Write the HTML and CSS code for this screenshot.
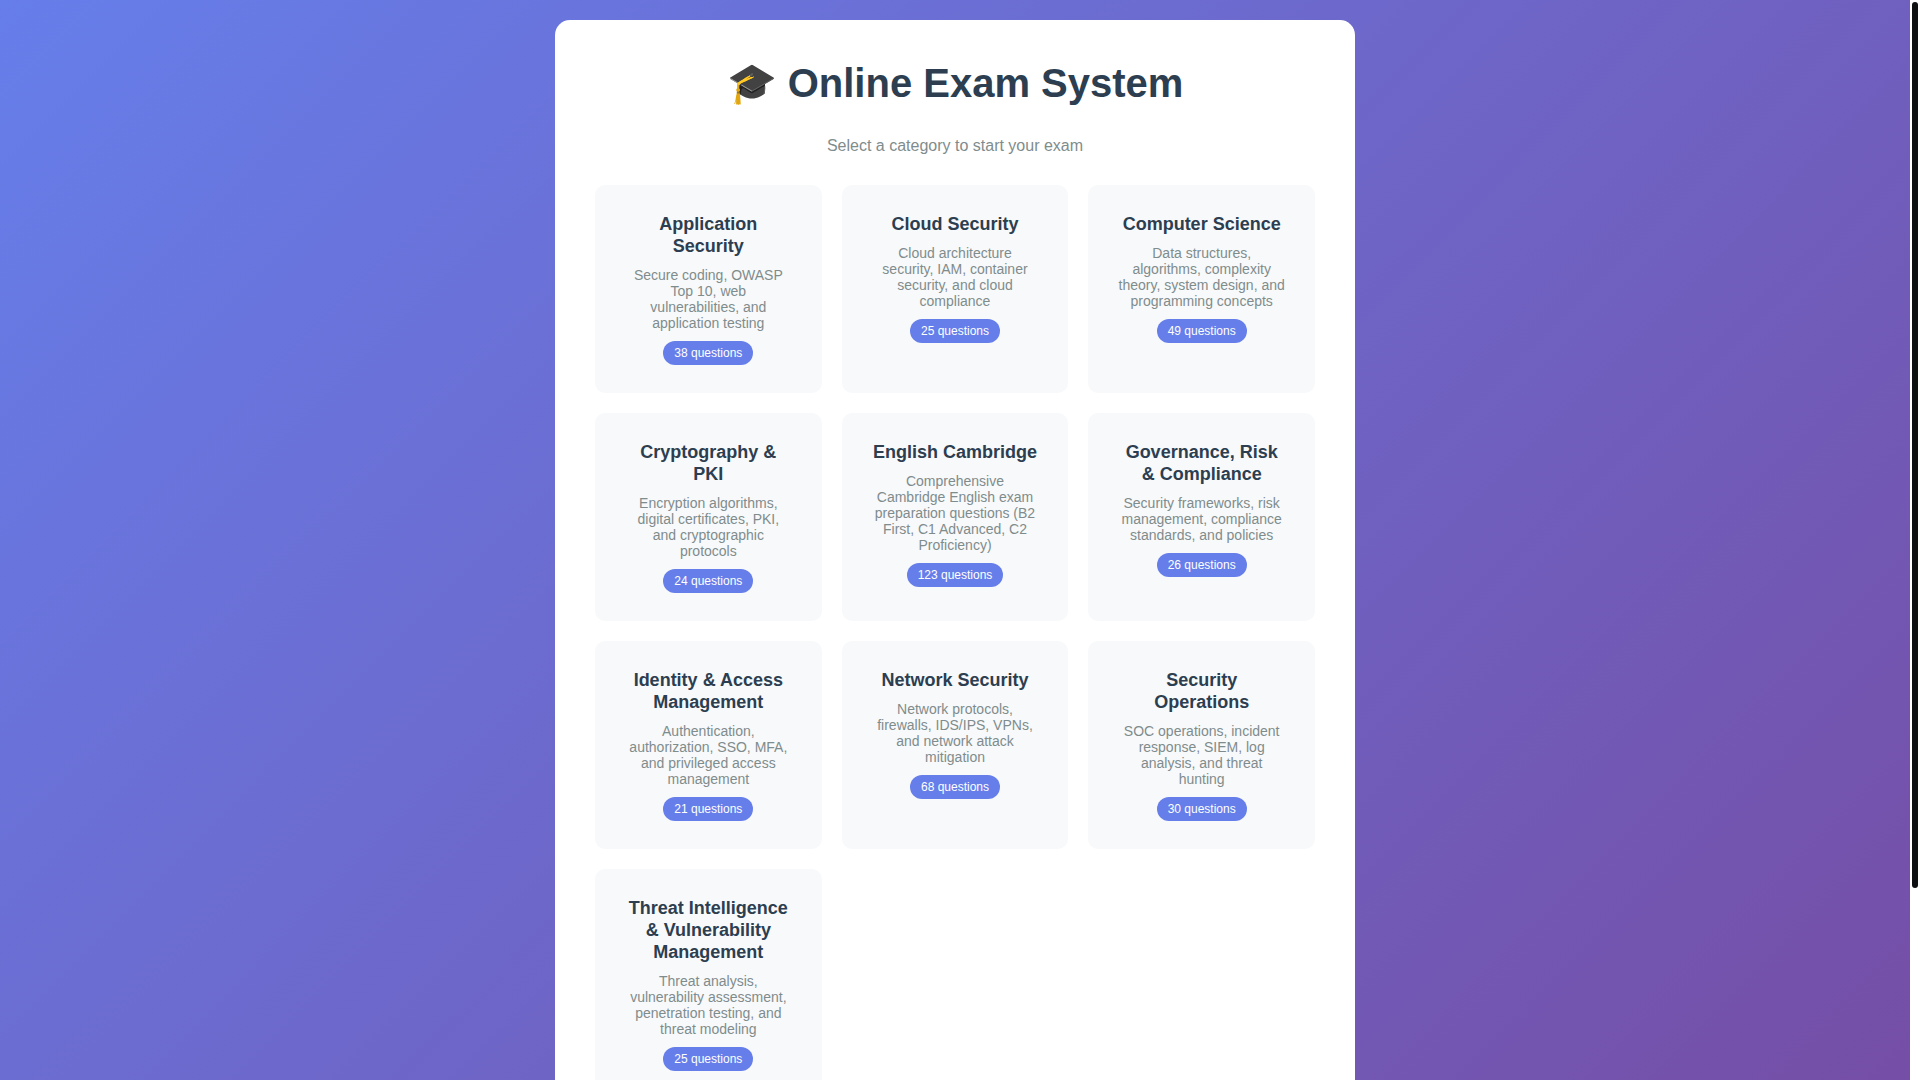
FILE: index.html
```html
<!DOCTYPE html>
<html lang="en">
<head>
<meta charset="utf-8">
<meta name="viewport" content="width=device-width, initial-scale=1">
<title>Online Exam System</title>
<link rel="stylesheet" href="styles.css">
</head>
<body>
<div class="scroller">
<div class="page">
<main class="container">
  <h1 class="title">🎓 Online Exam System</h1>
  <p class="subtitle">Select a category to start your exam</p>
  <div class="categories">
    <a class="card" href="#application-security"><h2 class="card-title">Application Security</h2><p class="card-text">Secure coding, OWASP Top 10, web<br>vulnerabilities, and application testing</p><span class="badge">38 questions</span></a>
    <a class="card" href="#cloud-security"><h2 class="card-title">Cloud Security</h2><p class="card-text">Cloud architecture<br>security, IAM, container<br>security, and cloud<br>compliance</p><span class="badge">25 questions</span></a>
    <a class="card" href="#computer-science"><h2 class="card-title">Computer Science</h2><p class="card-text">Data structures, algorithms, complexity theory, system design, and programming concepts</p><span class="badge">49 questions</span></a>
    <a class="card" href="#cryptography"><h2 class="card-title">Cryptography &amp;<br>PKI</h2><p class="card-text">Encryption algorithms, digital certificates, PKI,<br>and cryptographic<br>protocols</p><span class="badge">24 questions</span></a>
    <a class="card" href="#english-cambridge"><h2 class="card-title">English Cambridge</h2><p class="card-text">Comprehensive<br>Cambridge English exam preparation questions (B2 First, C1 Advanced, C2 Proficiency)</p><span class="badge">123 questions</span></a>
    <a class="card" href="#governance"><h2 class="card-title">Governance, Risk<br>&amp; Compliance</h2><p class="card-text">Security frameworks, risk management, compliance standards, and policies</p><span class="badge">26 questions</span></a>
    <a class="card" href="#identity-access"><h2 class="card-title">Identity &amp; Access Management</h2><p class="card-text">Authentication, authorization, SSO, MFA, and privileged access management</p><span class="badge">21 questions</span></a>
    <a class="card" href="#network-security"><h2 class="card-title">Network Security</h2><p class="card-text">Network protocols, firewalls, IDS/IPS, VPNs, and network attack mitigation</p><span class="badge">68 questions</span></a>
    <a class="card" href="#security-operations"><h2 class="card-title">Security<br>Operations</h2><p class="card-text">SOC operations, incident response, SIEM, log analysis, and threat hunting</p><span class="badge">30 questions</span></a>
    <a class="card" href="#threat-intelligence"><h2 class="card-title">Threat Intelligence &amp; Vulnerability Management</h2><p class="card-text">Threat analysis, vulnerability assessment, penetration testing, and threat modeling</p><span class="badge">25 questions</span></a>
  </div>
</main>
</div>
</div>
<div class="scrollbar" aria-hidden="true"><div class="scrollbar-thumb"></div><div class="scrollbar-rest"></div></div>
</body>
</html>
```
FILE: styles.css
```css
* {
  box-sizing: border-box;
  margin: 0;
  padding: 0;
}

body {
  display: flex;
  height: 100vh;
  font-family: "Liberation Sans", Arial, sans-serif;
  background: #fff;
}

.scroller {
  flex: 1;
  overflow-y: auto;
  scrollbar-width: none;
}

.scrollbar {
  display: flex;
  flex-direction: column;
  width: 10px;
  padding: 2px;
}

.scrollbar-thumb {
  flex: 14;
  border-radius: 3px;
  background: #0d0f10;
}

.scrollbar-rest {
  flex: 3;
}

.page {
  min-height: 100%;
  padding: 20px;
  background: linear-gradient(135deg, #667eea 0%, #764ba2 100%);
}

.container {
  max-width: 800px;
  margin: 0 auto;
  padding: 40px 40px 160px;
  background: #fff;
  border-radius: 15px;
  text-align: center;
}

.title {
  margin-bottom: 30px;
  font-size: 40px;
  line-height: 47px;
  color: #2c3e50;
}

.subtitle {
  margin-bottom: 30px;
  font-size: 16px;
  line-height: 18px;
  color: #7f8c8d;
}

.categories {
  display: grid;
  grid-template-columns: repeat(auto-fit, minmax(200px, 1fr));
  gap: 20px;
}

.card {
  padding: 28px;
  background: #f8f9fa;
  border-radius: 10px;
  color: #7f8c8d;
  text-decoration: none;
}

.card-title {
  margin-bottom: 10px;
  font-size: 18px;
  line-height: 22px;
  color: #2c3e50;
}

.card-text {
  margin-bottom: 10px;
  font-size: 14px;
  line-height: 16px;
}

.badge {
  display: inline-block;
  padding: 5px 11px;
  border-radius: 12px;
  background: #667eea;
  font-size: 12px;
  line-height: 14px;
  color: #fff;
  vertical-align: top;
}
```
